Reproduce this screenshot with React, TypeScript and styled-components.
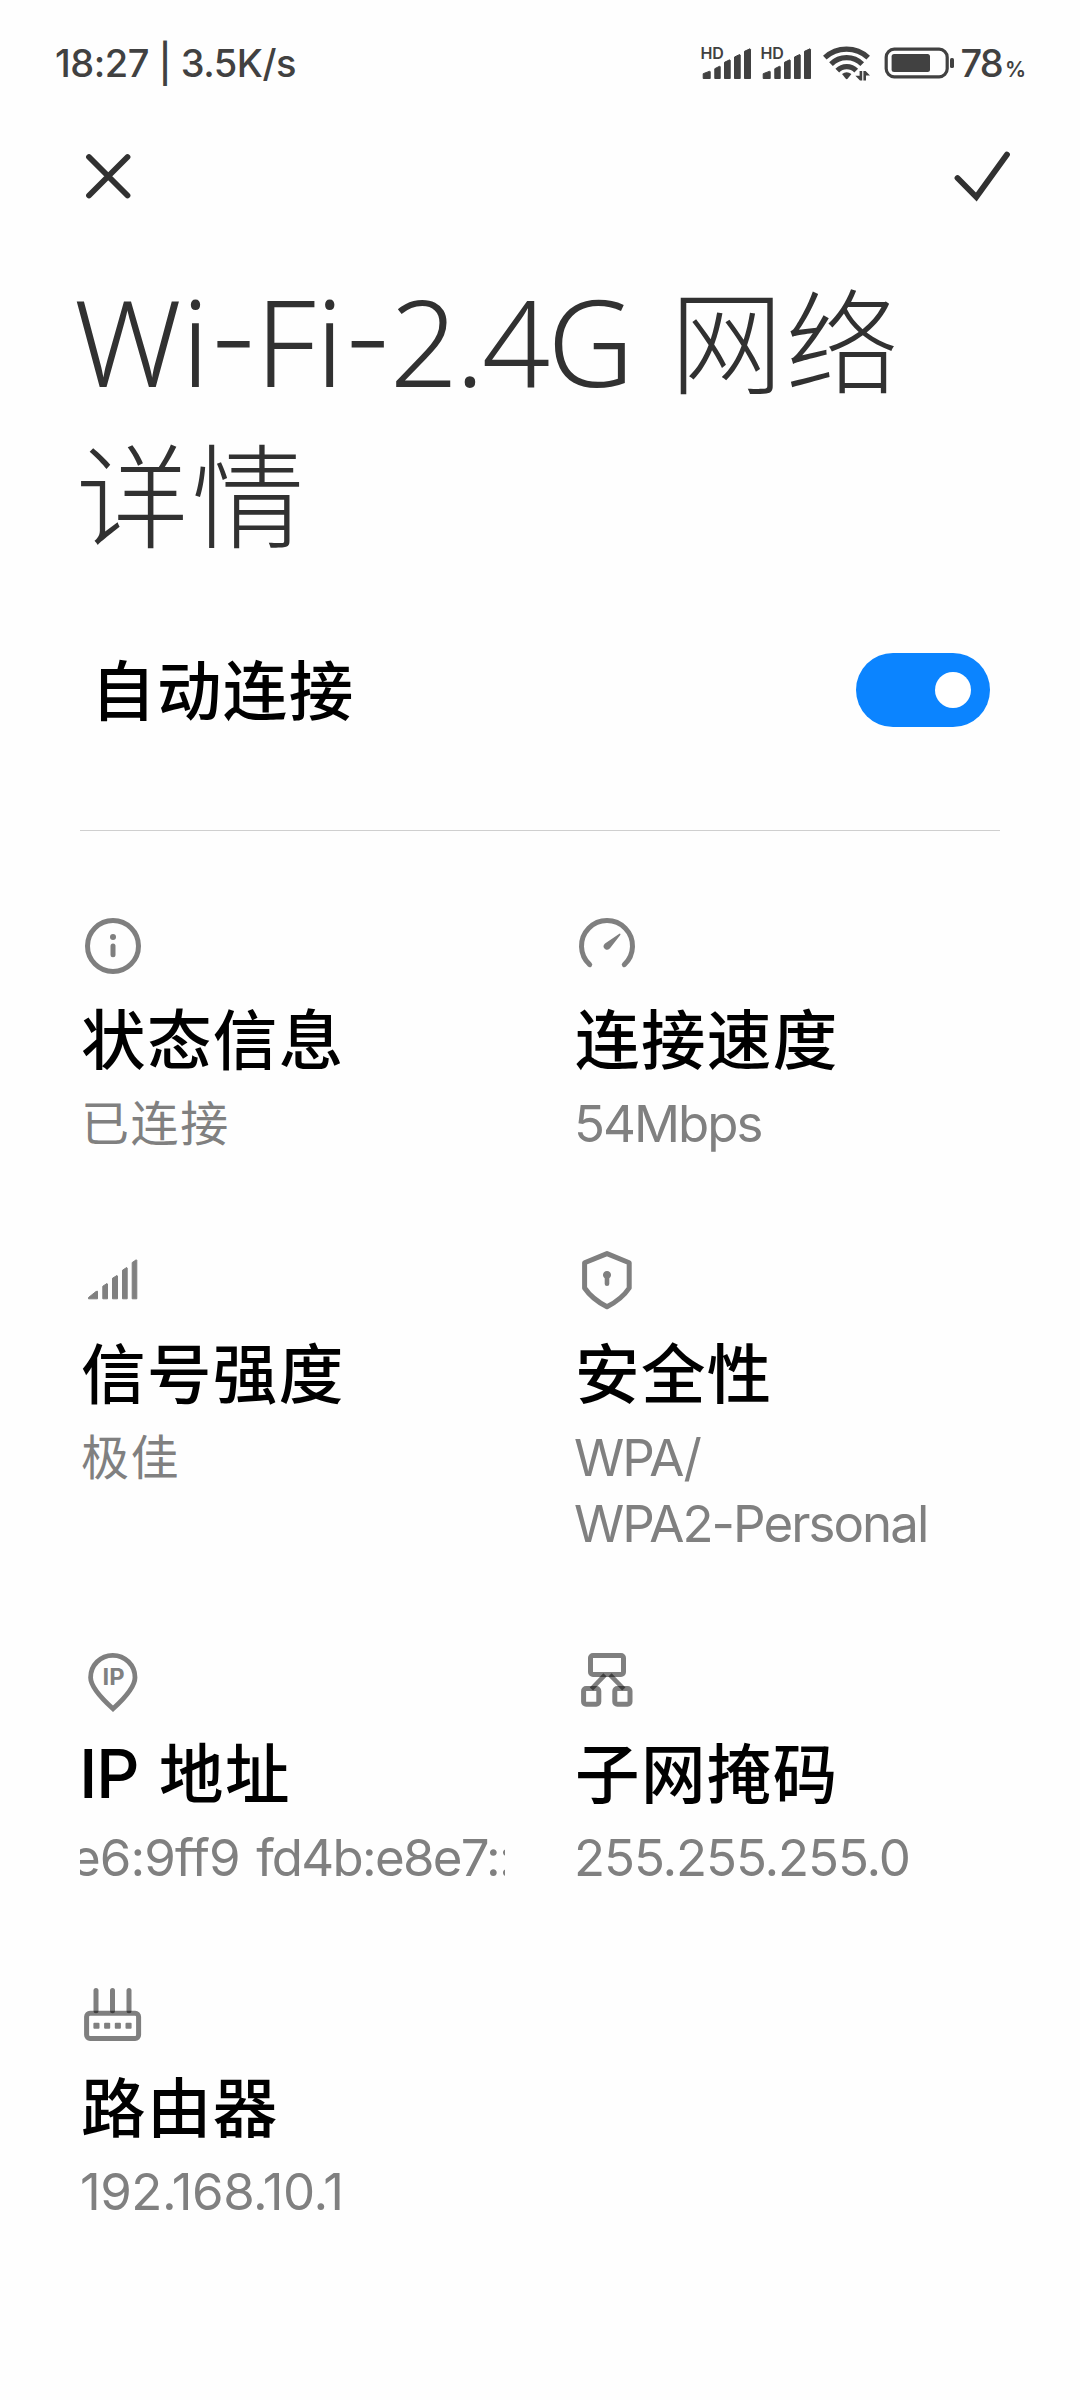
import React from "react";
import styled, { createGlobalStyle } from "styled-components";

const latin = 'Inter, "Noto Sans CJK SC", sans-serif';
const display = '"Noto Sans", "Noto Sans CJK SC", sans-serif';
const cjk = '"Noto Sans CJK SC", "Noto Sans", sans-serif';

const GlobalStyle = createGlobalStyle`
  * { box-sizing: border-box; }
  body { margin: 0; background: #fefefe; color: #000; font-family: ${cjk}; }
  svg { display: block; flex: none; overflow: visible; }
`;

const Page = styled.div`
  width: 1080px;
  height: 2400px;
  overflow: hidden;
  display: flex;
  flex-direction: column;
`;

const StatusBar = styled.header`
  height: 126px;
  padding: 0 54px 0 55px;
  display: flex;
  align-items: center;
  justify-content: space-between;
  color: #414141;
  font-family: ${latin};
  font-weight: 450;
`;

const StatusText = styled.span`
  font-size: 38px;
  line-height: 50px;
  letter-spacing: -0.5px;
  white-space: pre;
`;

const StatusIcons = styled.div`
  display: flex;
  align-items: center;
`;

const Signals = styled.div`
  display: flex;
  gap: 8px;
  margin-right: 10px;
`;

const BatteryBox = styled.div`
  margin: 0 5px 0 14px;
`;

const BatteryLevel = styled.div`
  margin-top: 6px;
  display: flex;
  align-items: baseline;
  font-size: 38px;
  line-height: 50px;
  letter-spacing: -1.8px;
`;

const Percent = styled.span`
  margin-left: 3px;
  font-size: 21px;
  font-weight: 600;
  letter-spacing: 0;
`;

const NavBar = styled.nav`
  height: 100px;
  padding: 0 66px 0 80px;
  display: flex;
  align-items: center;
  justify-content: space-between;
`;

const NavButton = styled.button`
  padding: 0;
  border: 0;
  background: none;
  color: #313131;
`;

const Title = styled.h1`
  margin: 33px 76px 0;
  width: 880px;
  height: 308px;
  font-size: 113px;
  font-weight: 300;
  line-height: 154px;
  letter-spacing: 2.5px;
  color: #313131;
`;

const TitleLatin = styled.span`
  margin: 0 11px 0 -2px;
  font-family: ${display};
  font-size: 119.5px;
  letter-spacing: 0;
  line-height: 0;
  vertical-align: -1.5px;
`;

const TitleVersion = styled.span`
  letter-spacing: -2.6px;
`;

const Dash = styled.span`
  font-family: ${latin};
  font-size: 106px;
  letter-spacing: -2px;
  vertical-align: 10px;
`;

const HeadingLatin = styled.span`
  margin: 0 5px 0 -2px;
  font-family: ${latin};
  font-size: 68px;
  font-weight: 550;
  letter-spacing: -1.5px;
  line-height: 0;
`;

const AutoConnect = styled.section`
  margin: 86px 90px 0 91px;
  height: 74px;
  display: flex;
  align-items: center;
  justify-content: space-between;
`;

const Heading = styled.h2`
  margin: 0;
  height: 80px;
  font-size: 64.5px;
  font-weight: 500;
  line-height: 80px;
  letter-spacing: 1.4px;
  white-space: nowrap;
`;

const SettingName = styled(Heading)`
  margin-bottom: 7px;
`;

const Switch = styled.button`
  width: 134px;
  height: 74px;
  padding: 0 19px;
  border: 0;
  border-radius: 37px;
  background: #0b84ff;
  display: flex;
  align-items: center;
  justify-content: flex-end;
`;

const Knob = styled.span`
  width: 36px;
  height: 36px;
  border-radius: 50%;
  background: #fff;
`;

const Divider = styled.hr`
  width: 920px;
  height: 1px;
  margin: 103px 80px 82px;
  border: 0;
  background: #cfcfcf;
`;

const Details = styled.section`
  margin: 0 80px;
  display: grid;
  grid-template-columns: 425px 425px;
  column-gap: 69px;
  row-gap: 92px;
`;

const Cell = styled.article`
  min-width: 0;
  display: flex;
  flex-direction: column;
`;

const CellHeading = styled(Heading)`
  margin: 17px 0 13px 1px;
`;

const Value = styled.p<{ $cjk?: boolean; $spacing?: number }>`
  margin: 0;
  font-family: ${(p) => (p.$cjk ? cjk : latin)};
  font-size: ${(p) => (p.$cjk ? 48 : 51)}px;
  font-weight: 400;
  line-height: ${(p) => (p.$cjk ? 62 : 66)}px;
  height: ${(p) => (p.$cjk ? "66px" : "auto")};
  letter-spacing: ${(p) => p.$spacing ?? (p.$cjk ? 1.6 : -1.1)}px;
  padding: ${(p) => (p.$cjk ? "0 0 0 1px" : "2px 0 0")};
  margin-bottom: ${(p) => (p.$cjk ? 0 : -2)}px;
  color: #808080;
  white-space: pre;
`;

const Marquee = styled(Value)`
  overflow: hidden;
  text-indent: -9px;
  word-spacing: 3px;
`;

const Address = styled.span`
  letter-spacing: -1.75px;
`;

const ink = "rgba(0, 0, 0, 0.5)";

const barPath = (bars: number[][], bottom: number, slope: number) =>
  bars
    .map(([l, r, t]) => `M${l + 0.5} ${bottom - 0.5}V${t + slope}L${r - 1} ${t + 0.5}L${r - 0.5} ${t + 1}V${bottom - 0.5}Z`)
    .join("");

const SignalStatus = () => (
  <svg width="52" height="36" viewBox="0 0 52 36" fill="#414141">
    <text x="0.4" y="14" fontFamily="Inter, sans-serif" fontWeight="600" fontSize="15.5" textLength="23.5" lengthAdjust="spacingAndGlyphs">HD</text>
    <path
      d={barPath([[2.7, 10.7, 25.7], [14.3, 20.7, 20.7], [24, 30.7, 14.3], [34, 40.7, 9], [44, 51, 3.3]], 34, 3)}
      stroke="#414141"
      strokeLinejoin="round"
    />
  </svg>
);

const WifiStatus = () => (
  <svg width="48" height="38" viewBox="0 0 48 38" fill="none" stroke="#414141" strokeWidth="5.2">
    <path d="M2.8 13.6A32 32 0 0 1 46.2 13.6" />
    <path d="M9 20.2A22 22 0 0 1 40.2 20.2" />
    <path d="M15.3 26.6A13 13 0 0 1 34.2 26.6" />
    <path d="M20 30Q24.7 26.6 29.4 30L25.8 34.6Q24.7 35.8 23.6 34.6Z" fill="#414141" stroke="none" />
    <path d="M37.6 27H40.2V36.5H38L33.4 31.8H37.6ZM41.4 36.5V27H43.6L48 31.4H44V36.5Z" fill="#414141" stroke="none" />
  </svg>
);

const BatteryStatus = () => (
  <svg width="71" height="32" viewBox="0 0 71 32">
    <rect x="2.2" y="2.2" width="61" height="27.6" rx="8" fill="none" stroke="#414141" strokeWidth="3.2" />
    <rect x="7.6" y="7" width="38.4" height="18" rx="2.5" fill="#414141" />
    <rect x="66" y="11" width="4" height="10" rx="1.6" fill="#414141" />
  </svg>
);

const CloseIcon = () => (
  <svg width="56" height="56" viewBox="0 0 56 56" fill="none" stroke="currentColor" strokeWidth="5.8" strokeLinecap="round">
    <path d="M9 9L47.5 47.5M47.5 9L9 47.5" />
  </svg>
);

const CheckIcon = () => (
  <svg width="64" height="56" viewBox="0 0 64 56" fill="none" stroke="currentColor" strokeWidth="5.8" strokeLinecap="round">
    <path d="M7.5 30L26.3 49L57 6.5" />
  </svg>
);

const DetailIcon = ({ children }: { children: React.ReactNode }) => (
  <svg width="66" height="66" viewBox="0 0 66 66" fill="none" stroke={ink} strokeWidth="5">
    {children}
  </svg>
);

const InfoIcon = () => (
  <DetailIcon>
    <circle cx="33" cy="33" r="25.5" />
    <circle cx="33" cy="24" r="3" fill={ink} stroke="none" />
    <path d="M33 33V41.8" strokeLinecap="round" />
  </DetailIcon>
);

const SpeedIcon = () => (
  <DetailIcon>
    <path d="M15.7 51.7A25.5 25.5 0 1 1 50.3 51.7" strokeLinecap="round" />
    <path d="M46.2 20.7Q46.8 21.2 46.3 22L36.2 35Q34.2 37.8 31.3 36.2Q27.8 33.6 31 30.4L45 21Q45.7 20.4 46.2 20.7Z" fill={ink} stroke="none" />
  </DetailIcon>
);

const StrengthIcon = () => (
  <DetailIcon>
    <path
      d={barPath([[22.3, 28, 36], [32, 38, 28], [42, 47.7, 20], [51.7, 57.3, 12.3]], 52.3, 3.2) + "M8.5 51.8V50.5L16 44.5L17.5 44.2V51.8Z"}
      fill="#808080"
      stroke="#808080"
      strokeWidth="1"
      strokeLinejoin="round"
    />
  </DetailIcon>
);

const SecurityIcon = () => (
  <DetailIcon>
    <path d="M33 6.6L55.2 15.8V41Q48 52 33 59.8Q18 52 10.6 41V15.8Z" strokeLinejoin="round" />
    <path d="M30.7 31.2A4 4 0 1 1 35.3 31.2V37Q35.3 39 33 39Q30.7 39 30.7 37Z" fill={ink} stroke="none" />
  </DetailIcon>
);

const AddressIcon = () => (
  <DetailIcon>
    <path d="M33 61.8C20 50 10.6 39 10.6 30.5A22.2 22.2 0 0 1 55 30.5C55 39 46 50 33 61.8Z" strokeWidth="4.8" />
    <text x="22.6" y="38" fontFamily="Inter, sans-serif" fontWeight="650" fontSize="23" textLength="22" lengthAdjust="spacingAndGlyphs" fill="#808080" stroke="none">IP</text>
  </DetailIcon>
);

const SubnetIcon = () => (
  <DetailIcon>
    <rect x="16.5" y="8.5" width="33" height="19" rx="2.5" />
    <rect x="9.6" y="41.6" width="15.2" height="15.6" rx="2.5" />
    <rect x="40.8" y="41.6" width="15.2" height="15.6" rx="2.5" />
    <path d="M31 27.8L17.4 42" strokeWidth="4.6" />
    <path d="M36 27.8L49.8 42" strokeWidth="4.6" />
  </DetailIcon>
);

const RouterIcon = () => (
  <DetailIcon>
    <rect x="6.6" y="32.2" width="52" height="25.2" rx="3.5" />
    {[16, 32.5, 49].map((x) => (
      <path key={x} d={`M${x} 9.4V29.8`} strokeLinecap="round" />
    ))}
    {[13.4, 24.1, 34.8, 45.5].map((x) => (
      <rect key={x} x={x} y="41.7" width="6.1" height="6.1" rx="1" fill={ink} stroke="none" />
    ))}
  </DetailIcon>
);

export default function App() {
  return (
    <Page>
      <GlobalStyle />
      <StatusBar>
        <StatusText>18:27 | 3.5K/s</StatusText>
        <StatusIcons>
          <Signals>
            <SignalStatus />
            <SignalStatus />
          </Signals>
          <WifiStatus />
          <BatteryBox>
            <BatteryStatus />
          </BatteryBox>
          <BatteryLevel>
            78<Percent>%</Percent>
          </BatteryLevel>
        </StatusIcons>
      </StatusBar>

      <NavBar>
        <NavButton aria-label="close">
          <CloseIcon />
        </NavButton>
        <NavButton aria-label="confirm">
          <CheckIcon />
        </NavButton>
      </NavBar>

      <Title>
        <TitleLatin>
          Wi<Dash>-</Dash>Fi<Dash>-</Dash>
          <TitleVersion>2.4G</TitleVersion>
        </TitleLatin>{" "}
        网络
        <br />
        详情
      </Title>

      <AutoConnect>
        <SettingName>自动连接</SettingName>
        <Switch role="switch" aria-checked="true">
          <Knob />
        </Switch>
      </AutoConnect>

      <Divider />

      <Details>
        <Cell>
          <InfoIcon />
          <CellHeading>状态信息</CellHeading>
          <Value $cjk>已连接</Value>
        </Cell>
        <Cell>
          <SpeedIcon />
          <CellHeading>连接速度</CellHeading>
          <Value $spacing={-2}>54Mbps</Value>
        </Cell>
        <Cell>
          <StrengthIcon />
          <CellHeading>信号强度</CellHeading>
          <Value $cjk>极佳</Value>
        </Cell>
        <Cell>
          <SecurityIcon />
          <CellHeading>安全性</CellHeading>
          <Value $spacing={-1.95}>{"WPA/\nWPA2-Personal"}</Value>
        </Cell>
        <Cell>
          <AddressIcon />
          <CellHeading>
            <HeadingLatin>IP</HeadingLatin> 地址
          </CellHeading>
          <Marquee $spacing={-0.9}>
            e6:9ff9 <Address>fd4b:e8e7::</Address>
          </Marquee>
        </Cell>
        <Cell>
          <SubnetIcon />
          <CellHeading>子网掩码</CellHeading>
          <Value>255.255.255.0</Value>
        </Cell>
        <Cell>
          <RouterIcon />
          <CellHeading>路由器</CellHeading>
          <Value $spacing={-0.5}>192.168.10.1</Value>
        </Cell>
      </Details>
    </Page>
  );
}
